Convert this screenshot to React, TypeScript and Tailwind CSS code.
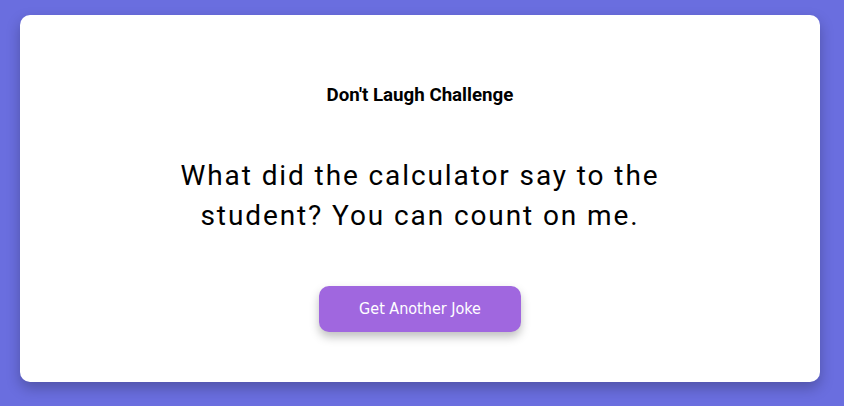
export default function App() {
  return (
    <div className="min-h-[406px] w-full bg-[#6a6edf] pt-[15px] pb-[24px] pl-[20px] flex" style={{ fontFamily: "Roboto, sans-serif" }}>
      <div className="w-[800px] h-[367px] bg-white rounded-[10px] shadow-[0_6px_14px_rgba(0,0,0,0.25)] flex flex-col items-center pt-[69px]">
        <h1 className="text-[18.72px] leading-[22px] font-bold text-black">Don't Laugh Challenge</h1>
        <p className="mt-[50px] max-w-[540px] text-center text-[28px] leading-[40px] tracking-[1.9px] text-black">
          What did the calculator say to the student? You can count on me.
        </p>
        <button className="mt-[50px] w-[202px] h-[46px] rounded-[10px] bg-[#a067df] text-white text-[16px] shadow-[0_5px_10px_rgba(0,0,0,0.25)]" style={{ fontFamily: '"DejaVu Sans Condensed", sans-serif' }}>
          Get Another Joke
        </button>
      </div>
    </div>
  );
}
